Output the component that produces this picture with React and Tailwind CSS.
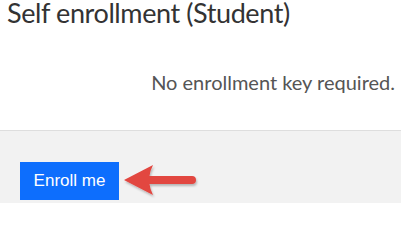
export default function App() {
  return (
    <div className="w-[401px] h-[203px] overflow-hidden bg-white flex flex-col">
      <div className="h-[130px] flex flex-col px-[7px] font-['Lato',_'Liberation_Sans',_sans-serif]">
        <h2 className="text-[27px] leading-[25px] tracking-[-0.4px] text-[#333333] font-normal whitespace-nowrap">
          Self enrollment (Student)
        </h2>
        <p className="mt-[47px] text-right mr-[-1px] text-[20px] leading-[20px] text-[#555555] whitespace-nowrap">
          No enrollment key required.
        </p>
      </div>
      <div className="flex-1 border-t border-[#dedede] bg-[#f2f2f2] pl-[20px] pt-[31px] flex items-start">
        <button className="w-[99px] h-[38px] bg-[#0d6efd] text-white text-[17px] leading-none font-['Liberation_Sans',_Arial,_sans-serif] pb-[2px]">
          Enroll me
        </button>
        <svg width="78" height="36" viewBox="0 0 78 36" className="ml-[3px] mt-[1px]">
          <defs>
            <filter id="sh" x="-10%" y="-20%" width="130%" height="160%">
              <feDropShadow dx="1" dy="2" stdDeviation="1.2" floodColor="#000" floodOpacity="0.25" />
            </filter>
          </defs>
          <path
            d="M2 17 L31 2 Q28 8 27.5 13 L70 13 A4 4 0 0 1 70 21 L27.5 21 Q28 26 31 32 Z"
            fill="#e2463f"
            filter="url(#sh)"
          />
        </svg>
      </div>
    </div>
  );
}
